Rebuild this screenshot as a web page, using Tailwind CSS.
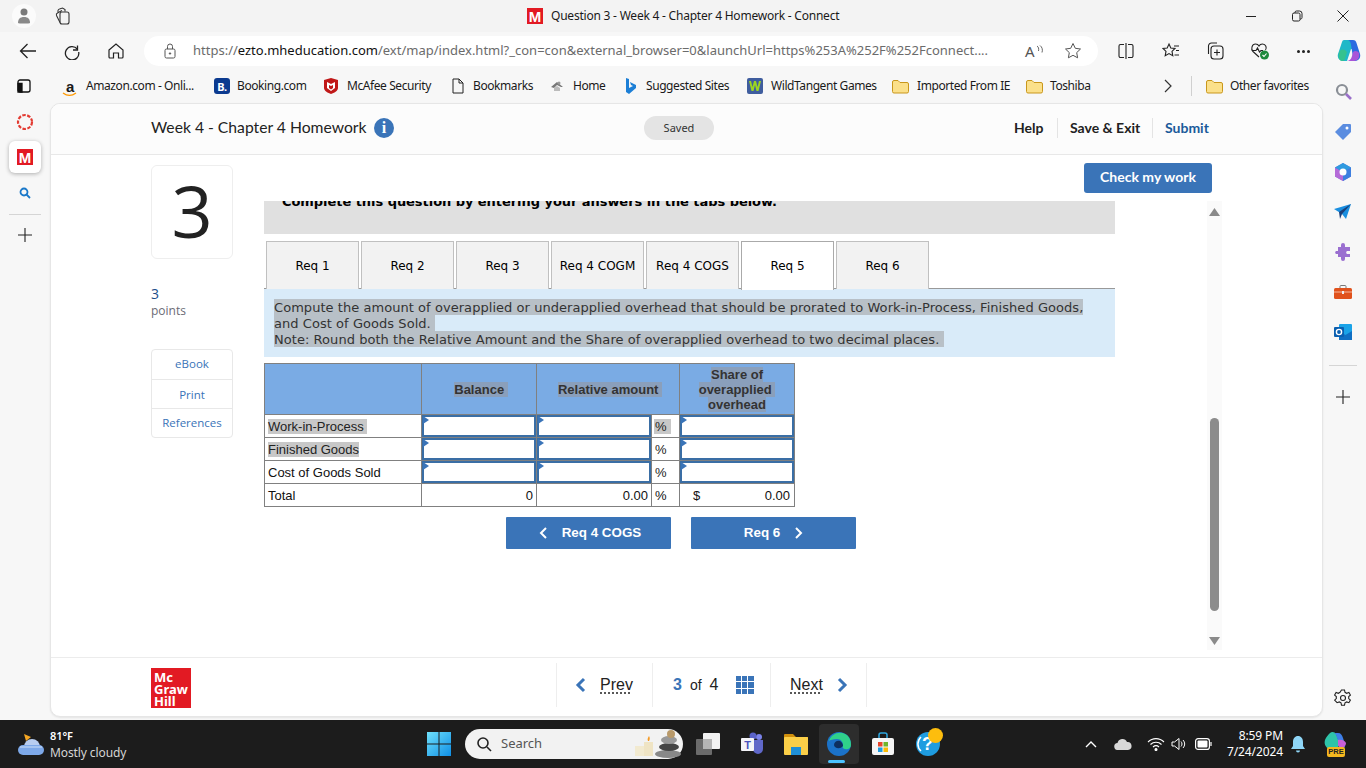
<!DOCTYPE html>
<html><head><meta charset="utf-8"><script src="https://cdn.jsdelivr.net/npm/@tailwindcss/browser@4"></script></head>
<body class="m-0">
<div class="w-[1366px] h-[768px] overflow-hidden flex flex-col bg-[#f7f7f7] text-[#1a1a1a] font-['Noto_Sans',sans-serif]">

<!-- title bar -->
<div class="h-8 shrink-0 bg-[#f3f3f3] flex items-center relative">
  <div class="ml-[12px] w-6 h-6 rounded-full bg-[#fbfbfb] flex items-center justify-center">
    <svg width="14" height="16" viewBox="0 0 14 16"><circle cx="7" cy="4" r="3.500" fill="#7a7a7a"/><path d="M1 15c0-4 2-6 6-6s6 2 6 6c0 .7-12 .7-12 0z" fill="#8a8a8a"/></svg>
  </div>
  <svg class="ml-[17px]" width="18" height="18" viewBox="0 0 18 18" fill="none" stroke="#333" stroke-width="1.100"><rect x="7" y="5" width="9" height="12" rx="2"/><path d="M7 15.500 3.500 8.500a2 2 0 0 1 1-2.500L9 3.500"/><path d="M5 5.500 5 3.500a2 2 0 0 1 1.500-1.500l3-1 2.500 1.500v2"/></svg>
  <div class="ml-[456px] w-4 h-4 bg-[#e21a23] flex items-center justify-center text-white font-black text-[15px] leading-none font-['Liberation_Sans',sans-serif]">M</div>
  <div class="ml-2 text-[12px] tracking-[-0.22px] whitespace-nowrap w-[288px]">Question 3 - Week 4 - Chapter 4 Homework - Connect</div>
  <svg class="ml-[406px]" width="12" height="12" viewBox="0 0 12 12" stroke="#222" fill="none"><path d="M1 6.500h10"/></svg>
  <svg class="ml-[34px]" width="12" height="12" viewBox="0 0 12 12" stroke="#222" fill="none"><rect x="1.500" y="3" width="7.500" height="8" rx="1.500"/><path d="M4 3V2.500A1.500 1.500 0 0 1 5.500 1h3A2.500 2.500 0 0 1 11 3.500v4A1.500 1.500 0 0 1 9 9"/></svg>
  <svg class="ml-[34px]" width="12" height="12" viewBox="0 0 12 12" stroke="#222" fill="none"><path d="M.5.500l11 11M11.500.500l-11 11"/></svg>
</div>

<!-- address bar -->
<div class="h-[38px] shrink-0 bg-[#f7f7f7] flex items-center">
  <svg class="ml-[19px]" width="18" height="18" viewBox="0 0 18 18" fill="none" stroke="#222" stroke-width="1.300"><path d="M17 9H1.500M8.500 2 1.500 9l7 7"/></svg>
  <svg class="ml-[26px]" width="18" height="18" viewBox="0 0 18 18" fill="none" stroke="#222" stroke-width="1.300"><path d="M14.500 3.500V8h-4.500"/><path d="M14.300 7A6.700 6.700 0 1 0 15.700 10"/></svg>
  <svg class="ml-[26px]" width="18" height="18" viewBox="0 0 18 18" fill="none" stroke="#222" stroke-width="1.200"><path d="M2 8 9 2l7 6v7a1 1 0 0 1-1 1h-3.500v-5h-5v5H3a1 1 0 0 1-1-1z"/></svg>
  <div class="ml-[19px] w-[954px] h-[30px] rounded-full bg-white flex items-center">
    <svg class="ml-[20px]" width="12" height="16" viewBox="0 0 12 16" fill="none" stroke="#555"><rect x="1" y="6" width="10" height="9" rx="1.500"/><path d="M3.500 6V3.500a2.500 2.500 0 0 1 5 0V6"/><circle cx="6" cy="10.500" r=".7" fill="#555"/></svg>
    <div class="ml-[17px] w-[812px] text-[13px] whitespace-nowrap overflow-hidden text-[#6b6b6b]">https://<span class="text-[#111]">ezto.mheducation.com</span>/ext/map/index.html?_con=con&amp;external_browser=0&amp;launchUrl=https%253A%252F%252Fconnect....</div>
    <div class="ml-[20px] w-[11px] text-[15px] text-[#555] leading-none">A</div>
    <svg class="ml-[0px]" width="8" height="12" viewBox="0 0 8 12" fill="none" stroke="#555" stroke-width=".9"><path d="M1 1c1.500 1 2 2.500 1.500 5M4 .5c2 1.500 3 4 2 7"/></svg>
    <svg class="ml-[20px]" width="18" height="18" viewBox="0 0 18 18" fill="none" stroke="#555"><path d="m9 1.500 2.300 4.800 5.200.7-3.800 3.600.9 5.200L9 13.300l-4.600 2.500.9-5.200L1.500 7l5.200-.7z"/></svg>
  </div>
  <svg class="ml-[19px]" width="18" height="18" viewBox="0 0 18 18" fill="none" stroke="#222" stroke-width="1.100"><path d="M7 2.500H3.500a1.500 1.500 0 0 0-1.500 1.500v10a1.500 1.500 0 0 0 1.500 1.500H7M11 2.500h3.500A1.500 1.500 0 0 1 16 4v10a1.500 1.500 0 0 1-1.500 1.500H11M9 1v16"/></svg>
  <svg class="ml-[27px]" width="18" height="18" viewBox="0 0 18 18" fill="none" stroke="#222" stroke-width="1.100"><path d="m7 2 1.800 4 4.200.5-3 2.900.8 4.300L7 11.600l-3.800 2.100.8-4.300-3-2.900L5.200 6zM12 4h5M14 8.500h3M12.500 13H17"/></svg>
  <svg class="ml-[26px]" width="18" height="18" viewBox="0 0 18 18" fill="none" stroke="#222" stroke-width="1.100"><path d="M11 1H5.500A3 3 0 0 0 2.500 4v8"/><rect x="5" y="4" width="12" height="13" rx="3"/><path d="M11 7.500v6M8 10.500h6"/></svg>
  <svg class="ml-[26px]" width="20" height="18" viewBox="0 0 20 18" fill="none" stroke="#222" stroke-width="1.100"><path d="M9 15 3 9.500C.5 7 2 2 5.500 2 7.300 2 8.500 3 9 4c.5-1 1.700-2 3.500-2C16 2 17 6 15.500 8"/><path d="M2.500 8.500H6l1.500-2.500 2 4 1.500-1.500h2"/><circle cx="14.500" cy="13" r="4.500" fill="#1e8a3c" stroke="none"/><path d="m12.500 13 1.500 1.500 2.500-3" stroke="#fff"/></svg>
  <div class="ml-[24px] w-[18px] flex gap-[2px] justify-center"><i class="w-[3px] h-[3px] rounded-full bg-[#222]"></i><i class="w-[3px] h-[3px] rounded-full bg-[#222]"></i><i class="w-[3px] h-[3px] rounded-full bg-[#222]"></i></div>
  <svg class="ml-[24px]" width="26" height="24" viewBox="0 0 26 24"><path d="M8 1h6c2 0 3 1 3.500 3L20 11 15 10 11 22H7C3 22 1 18 2 15L6 3c.4-1.300 1-2 2-2z" fill="#20b8c8"/><path d="M11 1h6c2 0 3 1 3.500 3l3.500 11c1 3-1 7-5 7h-6c3 0 4-2 4-4l-2-12c-.3-3-1.500-5-3.500-5z" fill="#2b6be0"/><path d="M10 22c3 0 5-1 6-5l1-4c2-2 5-1 6 1 1 4-1 8-5 8z" fill="#a855d8"/><path d="M3 14c1-4 4-4 6-3l2 2-2 7c-1 2-2 2-3 2-3 0-4-4-3-8z" fill="#35c28f"/></svg>
</div>

<!-- bookmarks -->
<div class="h-[33px] shrink-0 flex items-center pb-[1px] text-[12px] tracking-[-0.42px] whitespace-nowrap">
  <svg class="ml-[17px]" width="14" height="14" viewBox="0 0 14 14" fill="none" stroke="#111" stroke-width="1.300"><rect x="1" y="1" width="12" height="12" rx="2"/><path d="M1 4.500h4V13H1z" fill="#111"/></svg>
  <div class="ml-[31px] w-4 text-center text-[15px] font-bold leading-none relative font-['Liberation_Sans',sans-serif]">a<svg class="absolute left-0 top-[13px]" width="16" height="5" viewBox="0 0 16 5" fill="none" stroke="#f90" stroke-width="1.300"><path d="M1 1c4 3 9 3 13 0"/></svg></div>
  <div class="ml-[8px] w-[128px]">Amazon.com - Onli...</div>
  <div class="w-4 h-4 rounded-[3px] bg-[#0b3a8f] text-white text-[11px] font-bold flex items-center justify-center leading-none">B.</div>
  <div class="ml-[7px] w-[87px]">Booking.com</div>
  <svg width="14" height="16" viewBox="0 0 14 16"><path d="M0 2 7 0l7 2v8c0 3-4 5-7 6-3-1-7-3-7-6z" fill="#c01818"/><path d="M3 4l4 2 4-2v6l-4 3-4-3z" fill="#fff"/><path d="M5 7l2 1 2-1v3l-2 1.500L5 10z" fill="#c01818"/></svg>
  <div class="ml-[9px] w-[105px]">McAfee Security</div>
  <svg width="12" height="16" viewBox="0 0 12 16" fill="none" stroke="#222"><path d="M1 1h6l4 4v10H1zM7 1v4h4"/></svg>
  <div class="ml-[9px] w-[77px]">Bookmarks</div>
  <svg width="14" height="14" viewBox="0 0 14 14"><path d="M1 8 7 3l6 5-2 0-4-2-3 3z" fill="#777"/><path d="M4 9l3-2 3 2v3H4z" fill="#bbb"/><circle cx="9" cy="4" r="1.500" fill="#999"/></svg>
  <div class="ml-[9px] w-[52px]">Home</div>
  <svg width="12" height="16" viewBox="0 0 12 16"><path d="M1 0l3 1v9l4-2-2-1-1-3 6 3v3l-7 6-3-2z" fill="#1c7fd6"/></svg>
  <div class="ml-[9px] w-[101px]">Suggested Sites</div>
  <svg width="16" height="16" viewBox="0 0 16 16"><rect width="16" height="16" rx="2" fill="#3f5d9e"/><path d="M2 3l2.500 10h2L8 7l1.500 6h2L14 3h-2l-1.500 6L9 3H7L5.500 9 4 3z" fill="#9bd521"/></svg>
  <div class="ml-[8px] w-[121px]">WildTangent Games</div>
  <svg width="17" height="15" viewBox="0 0 17 15"><path d="M.5 3a1.500 1.500 0 0 1 1.500-1.500h4l2 2h7A1.500 1.500 0 0 1 16.500 5v7.500A1.500 1.500 0 0 1 15 14H2A1.500 1.500 0 0 1 .5 12.500z" fill="#fbe08a" stroke="#c9971c"/></svg>
  <div class="ml-[8px] w-[109px]">Imported From IE</div>
  <svg width="17" height="15" viewBox="0 0 17 15"><path d="M.5 3a1.500 1.500 0 0 1 1.500-1.500h4l2 2h7A1.500 1.500 0 0 1 16.500 5v7.500A1.500 1.500 0 0 1 15 14H2A1.500 1.500 0 0 1 .5 12.500z" fill="#fbe08a" stroke="#c9971c"/></svg>
  <div class="ml-[7px] w-[113px]">Toshiba</div>
  <svg width="10" height="14" viewBox="0 0 10 14" fill="none" stroke="#333" stroke-width="1.200"><path d="m2 1 6 6-6 6"/></svg>
  <div class="ml-[18px] w-px h-5 bg-[#d0d0d0]"></div>
  <svg class="ml-[14px]" width="17" height="15" viewBox="0 0 17 15"><path d="M.5 3a1.500 1.500 0 0 1 1.500-1.500h4l2 2h7A1.500 1.500 0 0 1 16.500 5v7.500A1.500 1.500 0 0 1 15 14H2A1.500 1.500 0 0 1 .5 12.500z" fill="#fbe08a" stroke="#c9971c"/></svg>
  <div class="ml-[7px] w-[80px]">Other favorites</div>
  <svg class="ml-[25px] mt-[11px]" width="18" height="18" viewBox="0 0 18 18" fill="none"><circle cx="7" cy="7" r="5" stroke="#8a8f96" stroke-width="2.200"/><path d="m11 11 5 5" stroke="#9a6fc9" stroke-width="2.600"/></svg>
</div>

<!-- main -->
<div class="flex h-[617px] shrink-0">
  <!-- left rail -->
  <div class="w-[50px] shrink-0 flex flex-col items-center pt-[10px]">
    <svg width="18" height="18" viewBox="0 0 18 18" fill="none"><circle cx="9" cy="9" r="7" stroke="#e33b32" stroke-width="2.200" stroke-dasharray="3.500 1.500"/></svg>
    <div class="mt-[10px] w-8 h-8 rounded-[6px] bg-white shadow-[0_1px_4px_rgba(0,0,0,.3)] flex items-center justify-center">
      <div class="w-4 h-4 bg-[#e21a23] text-white font-black text-[15px] leading-none flex items-center justify-center font-['Liberation_Sans',sans-serif]">M</div>
    </div>
    <svg class="mt-[14px]" width="12" height="12" viewBox="0 0 12 12" fill="none" stroke="#1a78c9" stroke-width="1.800"><circle cx="5" cy="5" r="3.500"/><path d="m7.500 7.500 3.500 3.500"/></svg>
    <div class="mt-[15px] w-8 h-px bg-[#d5d5d5]"></div>
    <svg class="mt-[12px]" width="16" height="16" viewBox="0 0 16 16" stroke="#222" stroke-width="1.100"><path d="M8 1v14M1 8h14"/></svg>
  </div>

  <!-- card -->
  <div class="w-[1273px] shrink-0 h-[614px] bg-white rounded-[10px] border border-[#e6e6e6] flex flex-col overflow-hidden shadow-[0_1px_2px_rgba(0,0,0,.08)]">
    <!-- header -->
    <div class="h-[51px] shrink-0 bg-[#fcfcfc] border-b border-[#e8e8e8] flex items-center pb-[2px] pl-[100px] font-['Lato',sans-serif]">
      <div class="w-[216px] text-[15.700px] text-[#222] whitespace-nowrap">Week 4 - Chapter 4 Homework</div>
      <div class="ml-[7px] w-5 h-5 rounded-full bg-[#3a74b8] text-white flex items-center justify-center text-[16px] font-bold leading-none font-['Liberation_Serif',serif]">i</div>
      <div class="ml-[250px] w-[70px] h-6 rounded-full bg-[#e4e4e4] flex items-center justify-center text-[11px] text-[#333] font-['Noto_Sans',sans-serif]">Saved</div>
      <div class="ml-[300px] mb-[2px] w-[43px] text-[14px] font-bold text-[#222]">Help</div>
      <div class="w-px h-5 bg-[#e4e4e4]"></div>
      <div class="ml-[12px] mb-[2px] w-[82px] text-[14px] font-bold text-[#222] whitespace-nowrap">Save &amp; Exit</div>
      <div class="w-px h-5 bg-[#e4e4e4]"></div>
      <div class="ml-[12px] mb-[2px] text-[14px] font-bold text-[#1a5a9a]">Submit</div>
    </div>

    <!-- body -->
    <div class="h-[502px] shrink-0 flex pl-[100px]">
      <!-- left col -->
      <div class="w-[82px] shrink-0 pt-[10px] font-['Open_Sans',sans-serif]">
        <div class="h-[94px] pb-[4px] rounded-[6px] border border-[#eeeeee] flex items-center justify-center text-[72px] font-normal leading-none text-[#222]">3</div>
        <div class="mt-[26px] text-[14px] leading-[18px] text-[#1d4e89]">3</div>
        <div class="text-[12px] leading-[16px] text-[#6b6b75]">points</div>
        <div class="mt-[30px] rounded-[4px] border border-[#e8e8e8] text-[11.500px] text-[#3a74b8] text-center">
          <div class="h-[30px] pb-[2px] flex items-center justify-center border-b border-[#e8e8e8]">eBook</div>
          <div class="h-[29px] pt-[1px] flex items-center justify-center border-b border-[#e8e8e8]">Print</div>
          <div class="h-[28px] flex items-center justify-center">References</div>
        </div>
      </div>

      <!-- question -->
      <div class="ml-[31px] w-[851px] shrink-0 pt-[46px] font-['DejaVu_Sans',sans-serif]">
        <div class="h-[33px] bg-[#e0e0e0] overflow-hidden pl-[18px]">
          <div class="-mt-[7px] text-[13px] tracking-[-0.05px] leading-[16px] font-bold text-black whitespace-nowrap">Complete this question by entering your answers in the tabs below.</div>
        </div>
        <div class="mt-[7px] h-[48px] flex gap-[2px] pl-[2px] border-b border-[#999] text-[12px] text-black">
          <div class="w-[93px] h-[48px] bg-[#f2f2f2] border border-[#c0c0c0] border-b-0 flex items-center justify-center">Req 1</div>
          <div class="w-[93px] h-[48px] bg-[#f2f2f2] border border-[#c0c0c0] border-b-0 flex items-center justify-center">Req 2</div>
          <div class="w-[93px] h-[48px] bg-[#f2f2f2] border border-[#c0c0c0] border-b-0 flex items-center justify-center">Req 3</div>
          <div class="w-[93px] h-[48px] bg-[#f2f2f2] border border-[#c0c0c0] border-b-0 flex items-center justify-center whitespace-nowrap">Req 4 COGM</div>
          <div class="w-[93px] h-[48px] bg-[#f2f2f2] border border-[#c0c0c0] border-b-0 flex items-center justify-center whitespace-nowrap">Req 4 COGS</div>
          <div class="w-[93px] h-[49px] bg-white border border-[#aaa] border-b-0 flex items-center justify-center">Req 5</div>
          <div class="w-[93px] h-[48px] bg-[#f2f2f2] border border-[#c0c0c0] border-b-0 flex items-center justify-center">Req 6</div>
        </div>
        <div class="h-[68px] bg-[#d9ebf9] pl-[10px] pt-[10px] text-[13px] leading-[16px] text-[#333] tracking-[0.05px]">
          <div class="h-4 whitespace-nowrap"><span class="inline-block h-4 leading-[18px] bg-[#b8c0c7]">Compute the amount of overapplied or underapplied overhead that should be prorated to Work-in-Process, Finished Goods,</span></div>
          <div class="h-4 whitespace-nowrap"><span class="inline-block h-4 leading-[18px] bg-[#b8c0c7]">and Cost of Goods Sold.&nbsp;</span></div>
          <div class="h-4 whitespace-nowrap"><span class="inline-block h-4 leading-[18px] bg-[#b8c0c7]">Note: Round both the Relative Amount and the Share of overapplied overhead to two decimal places.&nbsp;</span></div>
        </div>

        <table class="mt-[6px] w-[530px] table-fixed border-collapse text-[13px] leading-none text-[#222] font-['Liberation_Sans',sans-serif]">
          <colgroup><col class="w-[157px]"><col class="w-[115px]"><col class="w-[115px]"><col class="w-[28px]"><col class="w-[115px]"></colgroup>
          <thead class="bg-[#7aabe4] text-[#333] font-bold">
            <tr class="h-[51px]">
              <th class="border border-[#808080]"></th>
              <th class="border border-[#808080] pl-[4px] font-bold"><span class="bg-[#8a9fbb]">Balance&nbsp;</span></th>
              <th class="border border-[#808080] pl-[4px] font-bold" colspan="2"><span class="bg-[#8a9fbb]">Relative amount&nbsp;</span></th>
              <th class="border border-[#808080] font-bold leading-[15px]"><span class="bg-[#8a9fbb]">Share of<br>overapplied&nbsp;<br>overhead</span></th>
            </tr>
          </thead>
          <tbody>
            <tr class="h-[23px]">
              <td class="border border-[#808080] pl-[3px]"><span class="bg-[#c8c8c8]">Work-in-Process&nbsp;</span></td>
              <td class="border border-[#808080] p-0"><div class="relative h-[22px] bg-white border-2 border-[#3a6ea5]"><svg class="absolute -left-[1px] -top-[1px]" width="6" height="8" viewBox="0 0 6 8"><path d="M0 0l6 4-6 4z" fill="#3a74b8"/></svg></div></td>
              <td class="border border-[#808080] p-0"><div class="relative h-[22px] bg-white border-2 border-[#3a6ea5]"><svg class="absolute -left-[1px] -top-[1px]" width="6" height="8" viewBox="0 0 6 8"><path d="M0 0l6 4-6 4z" fill="#3a74b8"/></svg></div></td>
              <td class="border border-[#808080] pl-[2px]"><span class="bg-[#c8c8c8] px-[1px]">%&nbsp;</span></td>
              <td class="border border-[#808080] p-0"><div class="relative h-[22px] bg-white border-2 border-[#3a6ea5]"><svg class="absolute -left-[1px] -top-[1px]" width="6" height="8" viewBox="0 0 6 8"><path d="M0 0l6 4-6 4z" fill="#3a74b8"/></svg></div></td>
            </tr>
            <tr class="h-[23px]">
              <td class="border border-[#808080] pl-[3px]"><span class="bg-[#c8c8c8]">Finished Goods</span></td>
              <td class="border border-[#808080] p-0"><div class="relative h-[22px] bg-white border-2 border-[#3a6ea5]"><svg class="absolute -left-[1px] -top-[1px]" width="6" height="8" viewBox="0 0 6 8"><path d="M0 0l6 4-6 4z" fill="#3a74b8"/></svg></div></td>
              <td class="border border-[#808080] p-0"><div class="relative h-[22px] bg-white border-2 border-[#3a6ea5]"><svg class="absolute -left-[1px] -top-[1px]" width="6" height="8" viewBox="0 0 6 8"><path d="M0 0l6 4-6 4z" fill="#3a74b8"/></svg></div></td>
              <td class="border border-[#808080] pl-[3px]">%</td>
              <td class="border border-[#808080] p-0"><div class="relative h-[22px] bg-white border-2 border-[#3a6ea5]"><svg class="absolute -left-[1px] -top-[1px]" width="6" height="8" viewBox="0 0 6 8"><path d="M0 0l6 4-6 4z" fill="#3a74b8"/></svg></div></td>
            </tr>
            <tr class="h-[23px]">
              <td class="border border-[#808080] pl-[3px] text-[#111]">Cost of Goods Sold</td>
              <td class="border border-[#808080] p-0"><div class="relative h-[22px] bg-white border-2 border-[#3a6ea5]"><svg class="absolute -left-[1px] -top-[1px]" width="6" height="8" viewBox="0 0 6 8"><path d="M0 0l6 4-6 4z" fill="#3a74b8"/></svg></div></td>
              <td class="border border-[#808080] p-0"><div class="relative h-[22px] bg-white border-2 border-[#3a6ea5]"><svg class="absolute -left-[1px] -top-[1px]" width="6" height="8" viewBox="0 0 6 8"><path d="M0 0l6 4-6 4z" fill="#3a74b8"/></svg></div></td>
              <td class="border border-[#808080] pl-[3px]">%</td>
              <td class="border border-[#808080] p-0"><div class="relative h-[22px] bg-white border-2 border-[#3a6ea5]"><svg class="absolute -left-[1px] -top-[1px]" width="6" height="8" viewBox="0 0 6 8"><path d="M0 0l6 4-6 4z" fill="#3a74b8"/></svg></div></td>
            </tr>
            <tr class="h-[23px] text-[#111]">
              <td class="border border-[#808080] pl-[3px]">Total</td>
              <td class="border border-[#808080] text-right pr-[3px]">0</td>
              <td class="border border-[#808080] text-right pr-[3px]">0.00</td>
              <td class="border border-[#808080] pl-[3px]">%</td>
              <td class="border border-[#808080] pr-[4px] pl-[13px]"><div class="flex justify-between"><span>$</span><span>0.00</span></div></td>
            </tr>
          </tbody>
        </table>

        <div class="mt-[10px] ml-[242px] flex gap-[20px] font-['Liberation_Sans',sans-serif] text-white text-[13.400px] font-bold">
          <div class="w-[165px] h-8 pl-[3px] bg-[#3a74b8] rounded-[1px] flex items-center justify-center gap-[14px]">
            <svg width="9" height="12" viewBox="0 0 9 12" fill="none" stroke="#fff" stroke-width="2"><path d="M7 1 2 6l5 5"/></svg><span>Req 4 COGS</span>
          </div>
          <div class="w-[165px] h-8 bg-[#3a74b8] rounded-[1px] flex items-center justify-center gap-[14px]">
            <span>Req 6</span><svg width="9" height="12" viewBox="0 0 9 12" fill="none" stroke="#fff" stroke-width="2"><path d="m2 1 5 5-5 5"/></svg>
          </div>
        </div>
      </div>

      <!-- right col -->
      <div class="w-[107px] shrink-0 flex flex-col">
        <div class="mt-[8px] ml-[-31px] w-[128px] h-[30px] pb-[3px] rounded-[3px] bg-[#3a74b8] text-white text-[14px] font-bold flex items-center justify-center font-['Lato',sans-serif]">Check my work</div>
        <div class="mt-[8px] ml-[92px] w-[15px] h-[449px] bg-[#fafafa] relative">
          <svg class="absolute left-[2px] top-[7px]" width="11" height="8" viewBox="0 0 11 8"><path d="M5.500 0 11 8H0z" fill="#8a8a8a"/></svg>
          <div class="absolute left-[3px] top-[217px] w-[9px] h-[193px] rounded-full bg-[#8c8c8c]"></div>
          <svg class="absolute left-[2px] top-[436px]" width="11" height="8" viewBox="0 0 11 8"><path d="M0 0h11L5.500 8z" fill="#8a8a8a"/></svg>
        </div>
      </div>
    </div>

    <!-- footer -->
    <div class="flex-1 border-t border-[#ececec] flex items-start pt-[10px] pl-[100px] font-['Liberation_Sans',sans-serif]">
      <div class="w-10 h-10 bg-[#e21a23] text-white text-[13px] leading-[12px] font-bold pl-[3px] pt-[3px] font-['Noto_Sans',sans-serif]">Mc<br>Graw<br>Hill</div>
      <div class="ml-[365px] -mt-[5px] h-[44px] flex items-center text-[16px] text-[#222]">
        <div class="w-[96px] h-full border-l border-[#eee] flex items-center pl-[18px]">
          <svg width="11" height="16" viewBox="0 0 11 16" fill="none" stroke="#3a74b8" stroke-width="3"><path d="M9 2 3 8l6 6"/></svg>
          <span class="ml-[14px] underline decoration-dotted underline-offset-[3px]">Prev</span>
        </div>
        <div class="w-[118px] h-full border-l border-[#eee] flex items-center pl-[20px]">
          <span class="font-bold text-[#3a74b8]">3</span><span class="ml-[8px] text-[14px]">of</span><span class="ml-[8px]">4</span>
          <div class="ml-[17px] grid grid-cols-3 gap-[1px] w-[18px] h-[18px]"><i class="bg-[#3a74b8]"></i><i class="bg-[#3a74b8]"></i><i class="bg-[#3a74b8]"></i><i class="bg-[#3a74b8]"></i><i class="bg-[#3a74b8]"></i><i class="bg-[#3a74b8]"></i><i class="bg-[#3a74b8]"></i><i class="bg-[#3a74b8]"></i><i class="bg-[#3a74b8]"></i></div>
        </div>
        <div class="w-[97px] h-full border-x border-[#eee] flex items-center pl-[19px]">
          <span class="underline decoration-dotted underline-offset-[3px]">Next</span>
          <svg class="ml-[14px]" width="11" height="16" viewBox="0 0 11 16" fill="none" stroke="#3a74b8" stroke-width="3"><path d="m2 2 6 6-6 6"/></svg>
        </div>
      </div>
    </div>
  </div>

  <!-- right rail -->
  <div class="w-[43px] shrink-0 flex flex-col items-center pt-[20px] pr-[3px]">
    <svg width="18" height="18" viewBox="0 0 18 18"><path d="M9 1h7a1 1 0 0 1 1 1v7l-8 8-8-8z" fill="#5b8de0"/><circle cx="13" cy="5" r="1.500" fill="#fff"/></svg>
    <svg class="mt-[22px]" width="18" height="18" viewBox="0 0 18 18"><path d="M9 0l8 4.500v9L9 18l-8-4.500v-9z" fill="#6d6fd6"/><path d="M1 4.500 9 9v9l-8-4.500z" fill="#b56bd8"/><path d="M17 4.500 9 9v9l8-4.500z" fill="#3d7fe0"/><path d="M9 0l8 4.500L9 9 1 4.500z" fill="#2f9be0"/><circle cx="9" cy="9" r="3.500" fill="#fff"/></svg>
    <svg class="mt-[23px]" width="18" height="16" viewBox="0 0 18 16"><path d="M0 5 17 0l-5 15-4-5z" fill="#1a8fe0"/><path d="M5 8l12-8-9 10-2 5z" fill="#1b3f7a"/></svg>
    <svg class="mt-[22px]" width="18" height="20" viewBox="0 0 18 20"><path d="M4 5h3V3a2 2 0 0 1 4 0v2h5v4h-3a2 2 0 0 0 0 3h3v3h-5v2a2 2 0 0 1-4 0v-2H4v-3H2a2 2 0 0 1 0-3h2z" fill="#9a6fd0"/></svg>
    <svg class="mt-[23px]" width="18" height="14" viewBox="0 0 18 14"><path d="M6 3V1.500A1 1 0 0 1 7 .5h4a1 1 0 0 1 1 1V3" fill="none" stroke="#777"/><rect y="3" width="18" height="11" rx="1.500" fill="#e0521c"/><path d="M0 7h18" stroke="#f5b79e"/><rect x="8" y="6" width="2" height="3" fill="#eee"/></svg>
    <svg class="mt-[24px]" width="18" height="18" viewBox="0 0 18 18"><rect x="5" y="1" width="13" height="16" rx="1" fill="#1aa3e8"/><path d="M5 8l6.500 4L18 8v9H5z" fill="#0f6fc4"/><rect y="4" width="10" height="10" rx="1" fill="#0a5fb0"/><circle cx="5" cy="9" r="2.600" fill="none" stroke="#fff" stroke-width="1.400"/></svg>
    <div class="mt-[24px] w-7 h-px bg-[#d5d5d5]"></div>
    <svg class="mt-[24px]" width="14" height="14" viewBox="0 0 14 14" stroke="#222" stroke-width="1.100"><path d="M7 0v14M0 7h14"/></svg>
    <svg class="mt-[285px]" width="18" height="18" viewBox="0 0 18 18" fill="none" stroke="#222" stroke-width="1.100"><circle cx="9" cy="9" r="2.500"/><path d="M7.500 1h3l.5 2.300 1.700 1 2.200-.8 1.500 2.600-1.700 1.500v2l1.700 1.500-1.500 2.600-2.200-.8-1.700 1-.5 2.300h-3l-.5-2.300-1.700-1-2.200.8L.6 11.100l1.700-1.500v-2L.6 6.100l1.500-2.600 2.200.8 1.700-1z"/></svg>
  </div>
</div>

<!-- taskbar -->
<div class="h-[48px] shrink-0 bg-[#1c1c1c] flex items-center text-white">
  <svg class="ml-[18px]" width="26" height="24" viewBox="0 0 26 24"><path d="M8 9 6 2l7 3z" fill="#f5a623"/><circle cx="14" cy="15" r="8" fill="#b8cdf0"/><rect y="13" width="26" height="10" rx="5" fill="#7da8e8"/><path d="M2 15h22" stroke="#cfe0f8"/></svg>
  <div class="ml-[6px] w-[377px] text-[12px] leading-[17px] tracking-[-0.1px]">
    <div class="font-semibold text-[11px]">81°F</div><div class="text-[#d5d5d5]">Mostly cloudy</div>
  </div>
  <svg width="24" height="24" viewBox="0 0 24 24"><defs><linearGradient id="w" x1="0" y1="0" x2="1" y2="1"><stop offset="0" stop-color="#6fe0fb"/><stop offset="1" stop-color="#0f8fe6"/></linearGradient></defs><path d="M0 0h11.500v11.500H0zM12.500 0H24v11.500H12.500zM0 12.500h11.500V24H0zM12.500 12.500H24V24H12.500z" fill="url(#w)"/></svg>
  <div class="ml-[14px] w-[218px] h-[30px] rounded-full bg-[#f2f2f2] flex items-center text-[#555] text-[13px] relative">
    <svg class="ml-[11px]" width="16" height="16" viewBox="0 0 16 16" fill="none" stroke="#222" stroke-width="1.600"><circle cx="7" cy="7" r="5"/><path d="m11 11 4 4"/></svg>
    <span class="ml-[9px]">Search</span>
    <svg class="absolute right-0 top-0" width="50" height="30" viewBox="0 0 50 30"><rect x="2" y="17" width="10" height="10" fill="#f2ead0"/><rect x="11" y="13" width="9" height="14" fill="#efe4c4"/><path d="M15 12c-1-2 0-3 1-5 1 2 1 3 0 5z" fill="#f59a23"/><ellipse cx="35" cy="25" rx="13" ry="4" fill="#888"/><ellipse cx="36" cy="18" rx="10" ry="4" fill="#444"/><ellipse cx="36" cy="11" rx="8" ry="4" fill="#999"/><circle cx="38" cy="5" r="4" fill="#b99a6a"/></svg>
  </div>
  <div class="w-[3px]"></div>
  <div class="w-[44px] flex justify-center">
    <svg width="26" height="24" viewBox="0 0 26 24"><rect x="1" y="7" width="16" height="16" rx="1" fill="#6b6b6b"/><rect x="8" y="1" width="17" height="16" rx="1" fill="#f2f2f2"/><rect x="8" y="7" width="9" height="10" fill="#b5b5b5"/></svg>
  </div>
  <div class="w-[44px] flex justify-center">
    <svg width="24" height="24" viewBox="0 0 24 24"><circle cx="19" cy="5" r="3" fill="#7b83eb"/><circle cx="13" cy="4" r="3.500" fill="#5a62c9"/><path d="M9 8h14v9a5 5 0 0 1-10 0z" fill="#6068c9"/><rect x="1" y="6" width="13" height="13" rx="1" fill="#f4f4f8"/><text x="7.500" y="16.500" font-size="11" font-weight="700" text-anchor="middle" fill="#4b53bc" font-family="Liberation Sans">T</text></svg>
  </div>
  <div class="w-[43px] flex justify-center">
    <svg width="26" height="22" viewBox="0 0 26 22"><path d="M1 2a1 1 0 0 1 1-1h8l3 3h12v5H1z" fill="#d08f0c"/><rect x="1" y="4" width="24" height="18" rx="1" fill="#fbcf48"/><rect x="8" y="14" width="10" height="8" fill="#1f8fd6"/></svg>
  </div>
  <div class="w-[44px] h-[40px] flex justify-center items-center relative">
    <div class="w-[40px] h-[40px] rounded-[4px] bg-[#2d2d2d] flex items-center justify-center">
      <svg width="24" height="24" viewBox="0 0 24 24"><circle cx="12" cy="12" r="12" fill="#1b72c8"/><path d="M2 9C4 2 12-1 18 2c4 2 6 6 6 11 0 3-3 5-6 4-2 0-3-2-2-4 0-3-2-6-6-6-4 0-7 1-8 2z" fill="#2fd08a"/><path d="M7 13c0-3 3-5 6-4 2 1 3 3 3 5-3 4-9 2-9-1z" fill="#0d2f5e"/></svg>
    </div>
    <div class="absolute bottom-[1px] left-[11px] w-[17px] h-[3px] rounded-full bg-[#4cc2ff]"></div>
  </div>
  <div class="w-[44px] flex justify-center">
    <svg width="24" height="24" viewBox="0 0 24 24" fill="none"><path d="M8 6V3a2 2 0 0 1 2-2h4a2 2 0 0 1 2 2v3" stroke="#2ea7e0" stroke-width="1.500"/><rect x="1" y="6" width="22" height="17" rx="2" fill="#f5f5f5"/><path d="M7 10h4.500v4.500H7z" fill="#e8452c"/><path d="M12.500 10H17v4.500h-4.500z" fill="#6fb52c"/><path d="M7 15.500h4.500V20H7z" fill="#1e9ce0"/><path d="M12.500 15.500H17V20h-4.500z" fill="#fbbc05"/></svg>
  </div>
  <div class="w-[45px] flex justify-center relative">
    <svg width="24" height="24" viewBox="0 0 24 24"><circle cx="12" cy="12" r="12" fill="#1e9ce0"/><path d="M5 19A9.500 9.500 0 0 1 5 5" fill="none" stroke="#fff" stroke-width="1.500"/></svg>
    <span class="absolute left-[17px] top-0 text-[18px] font-bold leading-[24px] text-white font-['Liberation_Sans',sans-serif]">?</span>
    <div class="absolute left-[23px] -top-[4px] w-[15px] h-[15px] rounded-full bg-[#fdbd0d]"></div>
  </div>
  <svg class="ml-[135px]" width="12" height="8" viewBox="0 0 12 8" fill="none" stroke="#fff" stroke-width="1.400"><path d="m1 7 5-5 5 5"/></svg>
  <svg class="ml-[17px]" width="18" height="12" viewBox="0 0 18 12"><path d="M4 12a3.500 3.500 0 0 1-.5-7A5 5 0 0 1 13 4a4 4 0 0 1 1 8z" fill="#d8d8d8"/></svg>
  <svg class="ml-[15px]" width="18" height="14" viewBox="0 0 18 14" fill="none" stroke="#fff" stroke-width="1.100"><path d="M1 5c4.500-4.500 11.500-4.500 16 0M3.500 7.500c3-3 8-3 11 0M6 10c1.700-1.500 4.300-1.500 6 0"/><circle cx="9" cy="12.500" r="1" fill="#fff"/></svg>
  <svg class="ml-[6px]" width="15" height="14" viewBox="0 0 15 14" fill="none" stroke="#fff" stroke-width="1"><path d="M1 5h2.500L8 1.500v11L3.500 9H1zM10 4.500c1.300 1.500 1.300 3.500 0 5M12 3c2.200 2.500 2.200 5.500 0 8" /></svg>
  <svg class="ml-[9px]" width="17" height="12" viewBox="0 0 17 12" fill="none" stroke="#fff" stroke-width="1.200"><rect x=".6" y=".6" width="13.800" height="10.800" rx="2.500"/><rect x="2.500" y="2.500" width="10" height="7" rx="1" fill="#fff" stroke="none"/><path d="M16 4v4"/></svg>
  <div class="ml-[5px] w-[66px] text-right text-[12px] leading-[16px] tracking-[-0.1px] whitespace-nowrap"><div>8:59 PM</div><div>7/24/2024</div></div>
  <svg class="ml-[8px]" width="14" height="18" viewBox="0 0 14 18"><path d="M7 1c3 0 5 2.500 5 6v4l2 3H0l2-3V7c0-3.500 2-6 5-6z" fill="#8fd6f7"/><path d="M5 15.500h4a2 2 0 0 1-4 0z" fill="#8fd6f7"/></svg>
  <div class="ml-[18px] relative w-[24px] h-[26px]">
    <svg width="24" height="24" viewBox="0 0 24 24"><path d="M7 2c2-2 5-1 6 1l4 10c-2 5-8 7-11 5C2 16 1 12 2 9c1-3 3-5 5-7z" fill="#2ec4a9"/><path d="M9 2h6c3 0 4 2 5 5l2 6c1 3-2 6-5 6h-3c3-2 3-4 2-7L13 4c-1-2-2-2-4-2z" fill="#3d7fe8"/><path d="M15 9c4-1 7 1 8 3 0 3-3 5-6 6l-2-4z" fill="#c860d8"/></svg>
    <div class="absolute left-[4px] bottom-0 w-[18px] h-[10px] rounded-[2px] bg-[#f5b81f] text-[7.500px] font-bold text-[#222] leading-[10px] text-center font-['Liberation_Sans',sans-serif]">PRE</div>
  </div>
</div>
</div>
</body></html>
